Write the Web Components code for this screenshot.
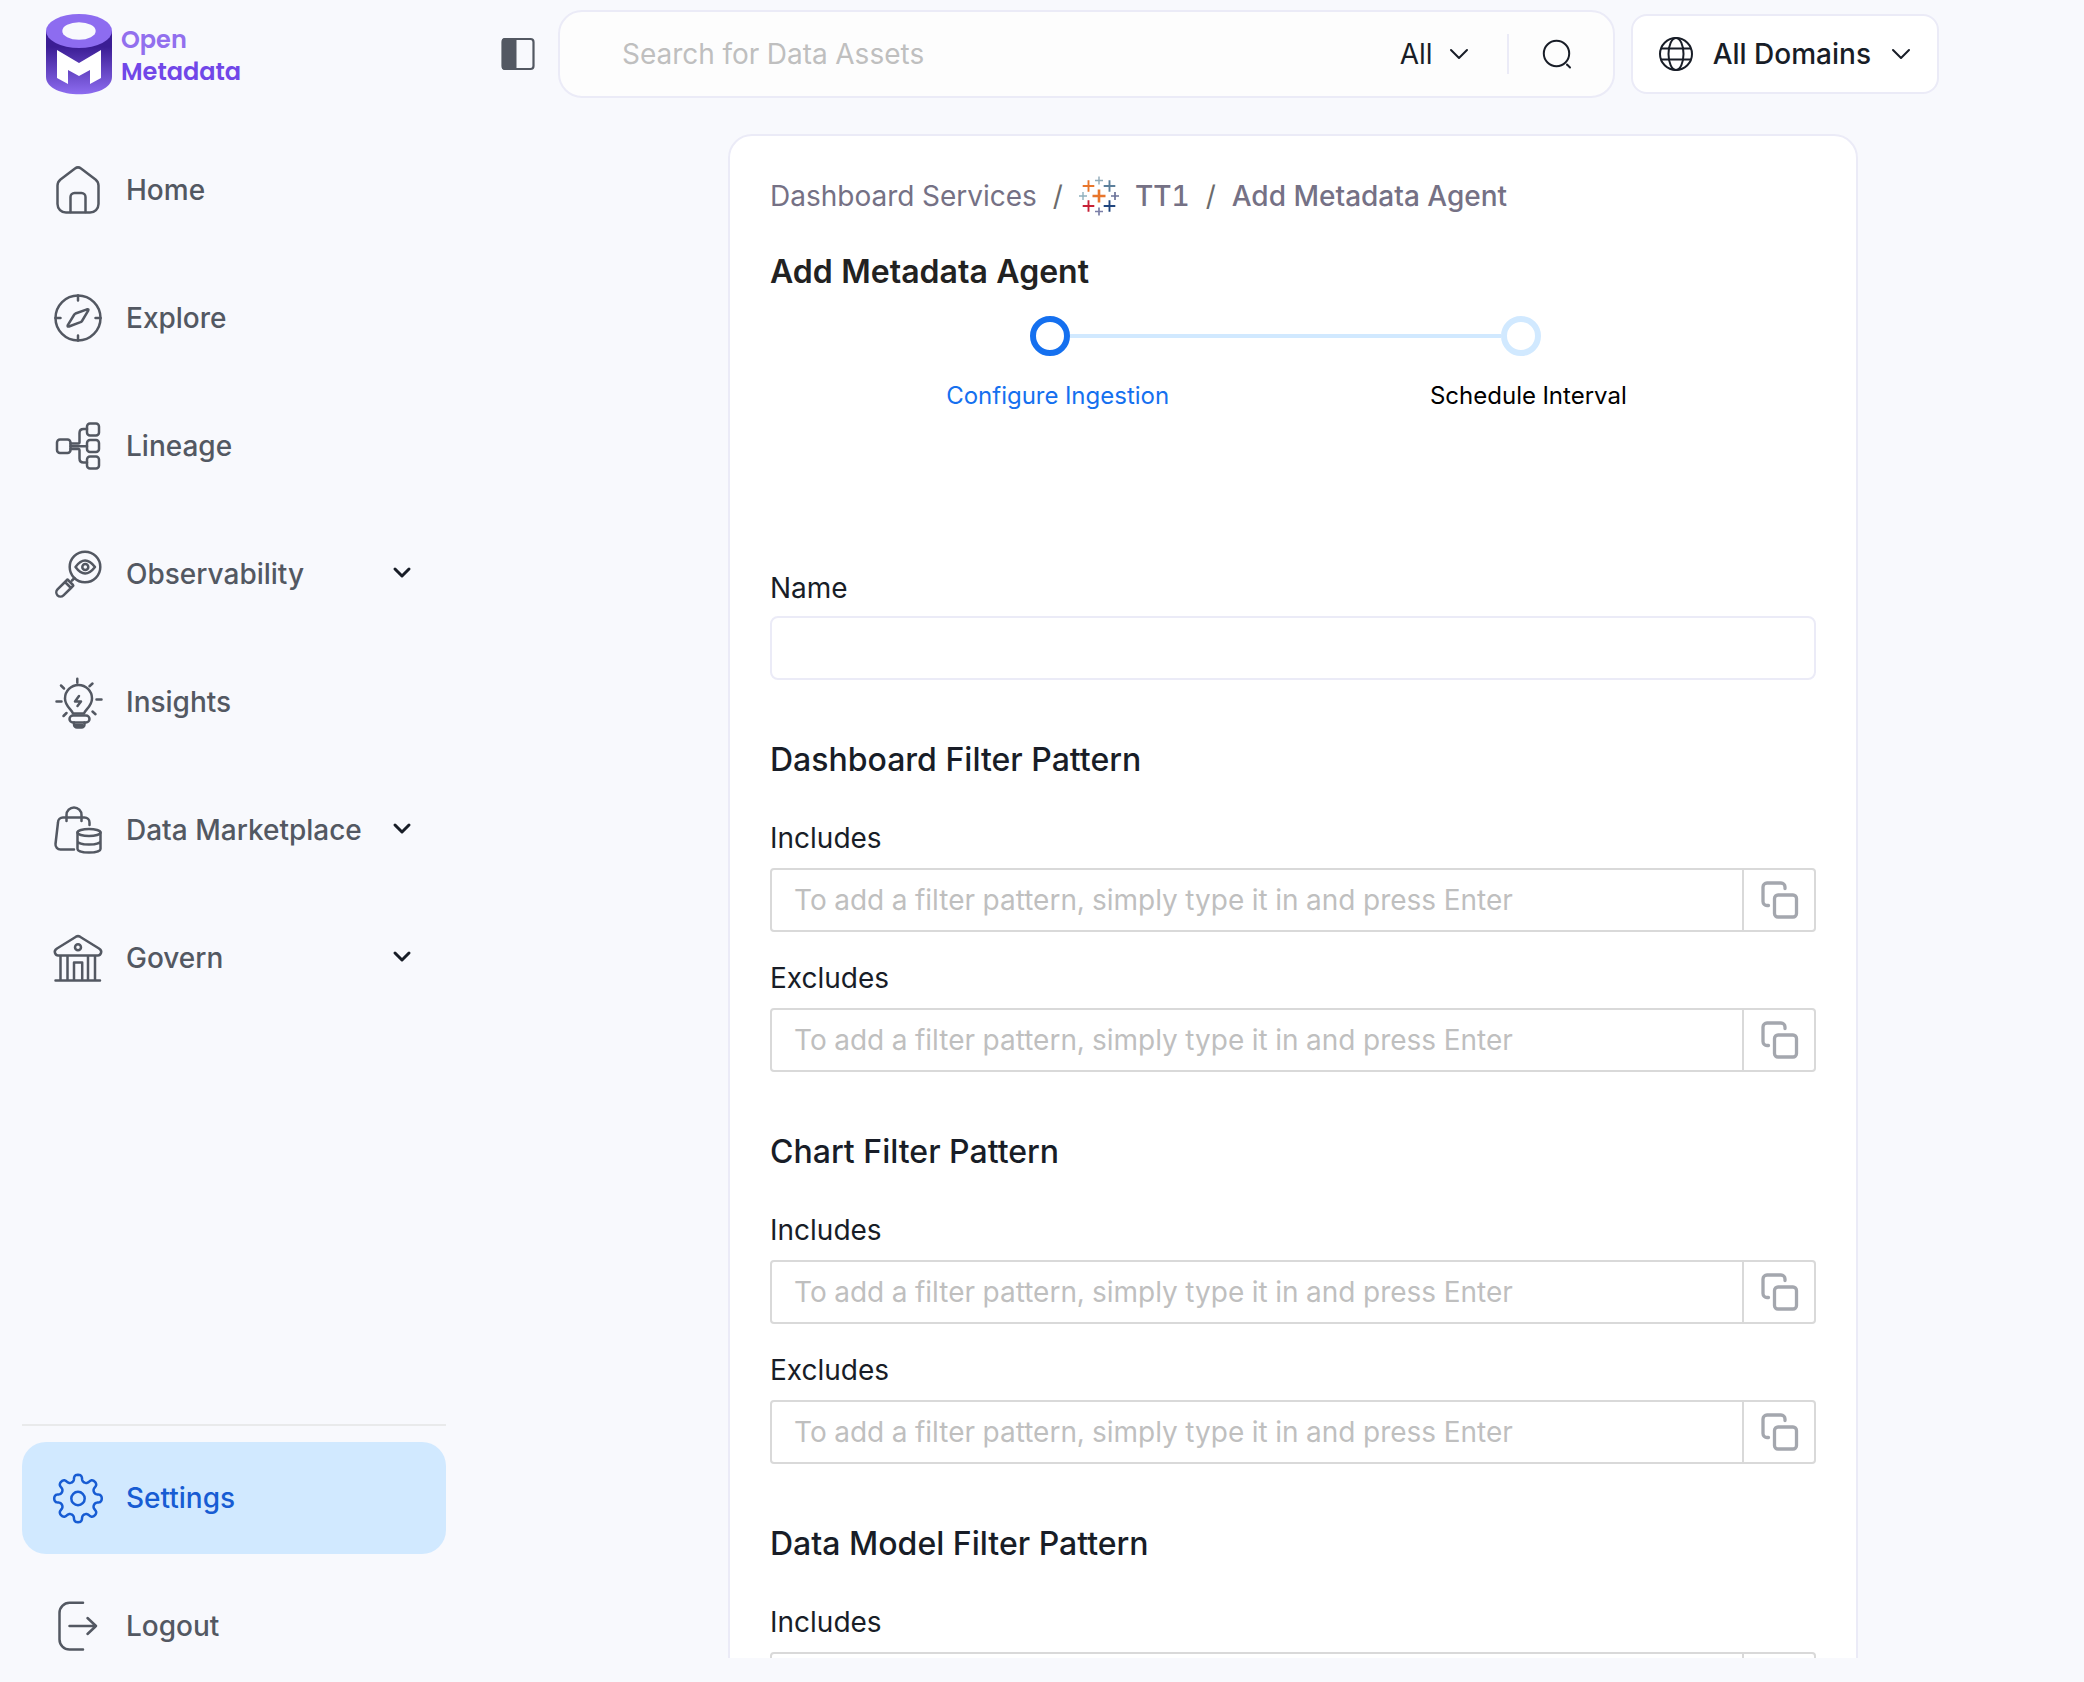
<!DOCTYPE html>
<html lang="en">
<head>
<meta charset="utf-8">
<meta name="viewport" content="width=device-width, initial-scale=1">
<title>Add Metadata Agent</title>
<style>
    :root {
        --bg: #f8f9fd;
        --ink: #181d27;
        --nav: #535862;
        --muted: #757185;
        --line: #ebebf7;
        --line-dark: #d9d9d9;
        --primary: #1570ef;
        --primary-soft: #d1e9ff;
    }
    body {
        margin: 0;
        background: var(--bg);
        color: var(--ink);
        font: 28px/40px Inter, "Liberation Sans", sans-serif;
        font-feature-settings: "tnum";
    }
</style>
</head>
<body>
<om-app>
    <om-sidebar slot="sidebar">
        <om-nav-item icon="home">Home</om-nav-item>
        <om-nav-item icon="explore">Explore</om-nav-item>
        <om-nav-item icon="lineage">Lineage</om-nav-item>
        <om-nav-item icon="observability" expandable>Observability</om-nav-item>
        <om-nav-item icon="insights">Insights</om-nav-item>
        <om-nav-item icon="marketplace" expandable>Data Marketplace</om-nav-item>
        <om-nav-item icon="govern" expandable>Govern</om-nav-item>
        <om-nav-item slot="bottom" icon="settings" active>Settings</om-nav-item>
        <om-nav-item slot="bottom" icon="logout">Logout</om-nav-item>
    </om-sidebar>
    <om-topbar slot="topbar"></om-topbar>
    <om-card>
        <om-breadcrumb></om-breadcrumb>
        <om-title>Add Metadata Agent</om-title>
        <om-stepper></om-stepper>
        <om-text-field label="Name"></om-text-field>
        <om-filter-section heading="Dashboard Filter Pattern">
            <om-pattern-field label="Includes"></om-pattern-field>
            <om-pattern-field label="Excludes"></om-pattern-field>
        </om-filter-section>
        <om-filter-section heading="Chart Filter Pattern">
            <om-pattern-field label="Includes"></om-pattern-field>
            <om-pattern-field label="Excludes"></om-pattern-field>
        </om-filter-section>
        <om-filter-section heading="Data Model Filter Pattern">
            <om-pattern-field label="Includes"></om-pattern-field>
        </om-filter-section>
    </om-card>
</om-app>

<script>
// Eight-lobed outline for the settings icon, in a 48x48 box
function gearPath() {
    const points = [];
    for (let i = 0; i < 160; i++) {
        const t = (i / 160) * Math.PI * 2;
        const r = 20.5 + 3.3 * Math.cos(8 * t);
        const a = t + 0.04 * Math.sin(16 * t);
        points.push(`${(24 + r * Math.sin(a)).toFixed(2)} ${(24.5 - r * Math.cos(a)).toFixed(2)}`);
    }
    return `M${points.join("L")}Z`;
}

const NAV_ICONS = {
    home: `<path d="M21 2.500a5 5 0 0 1 6 0L41.500 13.500a8 8 0 0 1 3 6V38a8.500 8.500 0 0 1-8.500 8.500H12A8.500 8.500 0 0 1 3.500 38V19.500a8 8 0 0 1 3-6Z"/><path d="M16.500 46V31a4 4 0 0 1 4-4h7a4 4 0 0 1 4 4v15"/>`,
    explore: `<circle cx="24" cy="24" r="22.500"/><path d="M24 1.500v5M24 41.500v5M1.500 24h5M41.500 24h5"/><path d="M21.500 19.500 33 15.300q2-.5 1.200 1.400L28 27q-.5.700-1.500 1.200L15 32.500q-2 .5-1.200-1.400L20 21q.6-1 1.500-1.500Z"/>`,
    lineage: `<rect x="3" y="17.500" width="13.500" height="13.500" rx="3"/><rect x="33" y="1.500" width="12" height="12" rx="3"/><rect x="33" y="18" width="12" height="12" rx="3"/><rect x="33" y="34.500" width="12" height="12" rx="3"/><path d="M16.500 21.500h8q1 0 1-1V11q0-4 4-4H33M16.500 24.200H33M16.500 27h8q1 0 1 1v8.500q0 4 4 4H33"/>`,
    observability: `<circle cx="31" cy="17" r="15.300"/><path d="M21.500 17q9.500-13 19.500 0-10 13-19.500 0Z"/><circle cx="31.300" cy="17" r="3"/><path d="M20.500 28 18 30.500M13.500 29.500l5.500 5.500M11 32 3.500 39.300a4.400 4.400 0 0 0 0 6 4.400 4.400 0 0 0 6 0L17 38ZM11 32l2.500-2.500M17 38l2.300-2.300"/>`,
    insights: `<path d="M19 35.500c-1-4-8-7-8-15a13.300 13.300 0 0 1 27 0c0 8-7 11-8 15Z"/><rect x="15.500" y="37.500" width="20" height="7" rx="3.500"/><path d="M20 44.500v2a3 3 0 0 0 3 3h4.500a3 3 0 0 0 3-3v-2M22 47h6M25 18l-4 5.500h6L23.500 28M23.300.8v4M7 7.500l3 3M38.500 5.500l-3 2.700M2.500 23.500h5M42.500 21.500h5M9.500 38l3-3M38.500 33.500l3 2.700"/>`,
    marketplace: `<path d="M20 43.500H6.500a5 5 0 0 1-5-5.500L4 16.500a5 5 0 0 1 5-5h21.500a5 5 0 0 1 5 5V19M12.500 15V9a7.500 7.500 0 0 1 15 0v6"/><ellipse cx="35" cy="26.500" rx="11.500" ry="3.500"/><path d="M23.500 26.500v16.500c0 4.700 23 4.700 23 0V26.500M23.500 35c0 4.700 23 4.700 23 0"/>`,
    govern: `<path d="M22 2.700a4 4 0 0 1 4 0L45 14.500q3 2 2 4.500-1 2.500-3 2.500H4q-2 0-3-2.500-1-2.500 2-4.500ZM1.500 46.500h44.500M6.500 21.500v25M13.500 21.500v25M34 21.500v25M41 21.500v25M20 46V28.500h8.200V46"/><circle cx="24" cy="13.200" r="3"/>`,
    settings: `<path d="${gearPath()}"/><circle cx="24" cy="24.500" r="6.700"/>`,
    logout: `<path d="M29 .8H15.500A10 10 0 0 0 5.500 11v26.500a10 10 0 0 0 10 10H29M15.500 24H42M33.500 16l8.500 8-8.500 8"/>`,
};

const chevron = (width, path = "m2 6 8 8 8-8") => `<svg class="chevron" width="20" height="20" viewBox="0 0 20 20" fill="none" stroke="currentColor" stroke-width="${width}" stroke-linecap="round" stroke-linejoin="round" aria-hidden="true"><path d="${path}"/></svg>`;

class OMElement extends HTMLElement {
    constructor() {
        super();
        this.attachShadow({ mode: "open" });
    }

    connectedCallback() {
        this.shadowRoot.innerHTML = `
            <style>
                * { box-sizing: border-box; }
                button, input, select { font: inherit; color: inherit; }
                button { background: none; border: 0; padding: 0; cursor: pointer; }
                a { color: inherit; text-decoration: none; }
                svg { display: block; flex: none; overflow: visible; }
                ${this.styles()}
            </style>
            ${this.render()}
        `;
    }
}

class OMApp extends OMElement {
    styles() {
        return `
            :host { display: flex; height: 100vh; }
            main {
                flex: 1;
                min-width: 0;
                display: flex;
                flex-direction: column;
                gap: 36px;
                padding: 10px 0 24px 56px;
            }
            .scroll {
                flex: 1;
                min-height: 0;
                overflow-y: auto;
                scrollbar-width: none;
                display: grid;
                grid-template-columns: 1fr 5fr 1fr;
            }
            .page { grid-column: 2; }
        `;
    }

    render() {
        return `
            <slot name="sidebar"></slot>
            <main>
                <slot name="topbar"></slot>
                <div class="scroll"><div class="page"><slot></slot></div></div>
            </main>
        `;
    }
}

class OMSidebar extends OMElement {
    styles() {
        return `
            :host {
                display: flex;
                flex-direction: column;
                justify-content: space-between;
                flex: none;
                width: 446px;
            }
            .logo {
                display: flex;
                align-items: center;
                gap: 9px;
                padding: 14px 46px 40px;
                color: #7147e8;
                font: 600 24px/32px Poppins, Inter, sans-serif;
            }
            .logo div { padding-top: 4px; }
            .logo span { display: block; }
            .open { color: #9270ee; }
            nav { display: flex; flex-direction: column; gap: 16px; padding-left: 22px; }
            .bottom { border-top: 2px solid #e9eaeb; margin-left: 22px; padding: 16px 0 0; }
        `;
    }

    render() {
        return `
            <div>
                <a class="logo" href="#home">
                    <svg width="66" height="80" viewBox="0 0 66 80" aria-hidden="true">
                        <defs><linearGradient id="side" x1="0" y1="0" x2="0" y2="1"><stop offset="0.25" stop-color="#3b1d94"/><stop offset="1" stop-color="#8d6cf0"/></linearGradient></defs>
                        <path fill="url(#side)" d="M0 17h66v46C66 86 0 86 0 63Z"/>
                        <ellipse cx="33" cy="17" rx="33" ry="17" fill="#8d6cf0"/>
                        <ellipse cx="33" cy="17" rx="16.700" ry="8.800" fill="#f8f9fd"/>
                        <path fill="#fff" d="M11 36 33 49 55 36V64L44 70V56L33 62 22 56V70L11 64Z"/>
                    </svg>
                    <div><span class="open">Open</span><span>Metadata</span></div>
                </a>
                <nav aria-label="Main"><slot></slot></nav>
            </div>
            <nav class="bottom" aria-label="Account"><slot name="bottom"></slot></nav>
        `;
    }
}

class OMNavItem extends OMElement {
    styles() {
        return `
            :host { display: block; color: var(--nav); font-weight: 500; }
            :host([active]) { color: #175cd3; }
            .item {
                display: flex;
                align-items: center;
                gap: 24px;
                width: 100%;
                height: 112px;
                padding: 0 34px 0 32px;
                border-radius: 24px;
                text-align: left;
            }
            :host([active]) .item { background: var(--primary-soft); }
            .label { flex: 1; white-space: nowrap; }
            .chevron { color: var(--ink); }
        `;
    }

    render() {
        const icon = `<svg width="48" height="48" viewBox="0 0 48 48" fill="none" stroke="currentColor" stroke-width="2.500" stroke-linecap="round" stroke-linejoin="round" aria-hidden="true">${NAV_ICONS[this.getAttribute("icon")]}</svg>`;
        const label = `<span class="label"><slot></slot></span>`;
        if (this.hasAttribute("expandable")) {
            return `<button class="item" type="button" aria-expanded="false">${icon}${label}${chevron(3, "m3 5 7 7 7-7")}</button>`;
        }
        return `<a class="item" href="#${this.getAttribute("icon")}">${icon}${label}</a>`;
    }
}

class OMTopbar extends OMElement {
    styles() {
        return `
            :host { display: flex; align-items: center; padding-right: 145px; }
            .search {
                flex: 1;
                display: flex;
                align-items: center;
                height: 88px;
                margin: 0 16px 0 22px;
                padding: 0 42px 0 62px;
                border: 2px solid var(--line);
                border-radius: 24px;
                background: #fdfdfd;
            }
            input { flex: 1; min-width: 0; border: 0; padding: 0; outline: 0; background: none; }
            input::placeholder { color: #bfbfbf; opacity: 1; }
            .scope { position: relative; display: flex; align-items: center; }
            select { appearance: none; border: 0; background: none; padding: 0 36px 0 0; }
            .scope svg { position: absolute; right: 0; pointer-events: none; }
            .go { border-left: 2px solid var(--line); margin-left: 38px; padding: 6px 0 6px 34px; }
            .domains {
                display: flex;
                align-items: center;
                gap: 20px;
                height: 80px;
                padding: 0 26px;
                border: 2px solid var(--line);
                border-radius: 16px;
                background: #fff;
                font-weight: 500;
                white-space: nowrap;
            }
        `;
    }

    render() {
        return `
            <button type="button" aria-label="Toggle sidebar">
                <svg width="34" height="34" viewBox="1 0 34 34" aria-hidden="true">
                    <rect x="1.500" y="2" width="31" height="30" rx="3" fill="none" stroke="#535862" stroke-width="2.200"/>
                    <path d="M4 1h11.500v32H4a3 3 0 0 1-3-3V4a3 3 0 0 1 3-3Z" fill="#535862"/>
                </svg>
            </button>
            <div class="search">
                <input type="search" aria-label="Search" placeholder="Search for Data Assets">
                <div class="scope">
                    <select aria-label="Search scope"><option>All</option></select>
                    ${chevron(2)}
                </div>
                <button class="go" type="button" aria-label="Run search">
                    <svg width="28" height="28" viewBox="0 0 28 28" fill="none" stroke="currentColor" stroke-width="2" stroke-linecap="round" aria-hidden="true"><circle cx="13.500" cy="13.500" r="12.700"/><path d="m24 24.500 3 3"/></svg>
                </button>
            </div>
            <button class="domains" type="button" aria-haspopup="listbox">
                <svg width="34" height="34" viewBox="0 0 34 34" fill="none" stroke="currentColor" stroke-width="2" aria-hidden="true">
                    <circle cx="17" cy="17" r="16"/><ellipse cx="17" cy="17" rx="7.500" ry="16"/><path d="M2 11.500h30M2 22.500h30"/>
                </svg>
                <span>All Domains</span>
                ${chevron(2)}
            </button>
        `;
    }
}

class OMCard extends OMElement {
    styles() {
        return `
            :host {
                display: flex;
                flex-direction: column;
                gap: 56px;
                padding: 40px 40px 56px;
                border: 2px solid var(--line);
                border-radius: 24px;
                background: #fff;
            }
            ::slotted(om-title) { margin-top: -24px; }
            ::slotted(om-stepper) { margin-top: -36px; }
        `;
    }

    render() {
        return `<slot></slot>`;
    }
}

class OMTitle extends OMElement {
    styles() {
        return `
            :host { display: block; color: #222; }
            h1 { margin: 0; font: inherit; font-weight: 600; font-size: 32px; line-height: 48px; }
        `;
    }

    render() {
        return `<h1><slot></slot></h1>`;
    }
}

class OMBreadcrumb extends OMElement {
    styles() {
        return `
            :host { display: block; color: var(--muted); }
            ol { display: flex; align-items: center; margin: 0; padding: 0; list-style: none; white-space: nowrap; }
            li, a { display: flex; align-items: center; }
            li + li::before { content: "/"; margin: 0 16px; color: #6b6b6b; }
            .strong { gap: 16px; font-weight: 500; }
        `;
    }

    render() {
        // [x, y, arm length, stroke width, colour]
        const marks = [
            [20, 20, 6.5, 2.6, "#e8762c"], [9.5, 10, 5.8, 1.9, "#e8762c"], [30.5, 10, 5.8, 1.9, "#5b7f9b"],
            [9.5, 30, 5.8, 1.9, "#c72035"], [30.5, 30, 5.8, 1.9, "#1f457e"], [20, 4.5, 4, 1.4, "#8fa9b8"],
            [4, 20, 4, 1.4, "#8fb0bd"], [36, 20, 4, 1.7, "#6b7399"], [20, 35.5, 4, 1.7, "#7b7fa8"],
        ];
        const crosses = marks.map(([x, y, r, w, c]) =>
            `<path d="M${x - r} ${y}h${2 * r}M${x} ${y - r}v${2 * r}" stroke="${c}" stroke-width="${w}"/>`).join("");
        return `
            <nav aria-label="Breadcrumb">
                <ol>
                    <li><a href="#dashboard-services">Dashboard Services</a></li>
                    <li><a class="strong" href="#tt1"><svg width="40" height="40" viewBox="0 0 40 40" aria-hidden="true">${crosses}</svg>TT1</a></li>
                    <li><span class="strong" aria-current="page">Add Metadata Agent</span></li>
                </ol>
            </nav>
        `;
    }
}

class OMStepper extends OMElement {
    styles() {
        return `
            :host { display: block; margin-bottom: 98px; }
            ol {
                display: grid;
                grid-template-columns: 45% 45%;
                justify-content: center;
                margin: 0;
                padding: 0;
                list-style: none;
                color: #000;
                font-size: 24px;
                line-height: 32px;
                text-align: center;
            }
            .track { display: grid; grid-template-columns: 14fr 40px 15fr; align-items: center; margin-bottom: 24px; }
            .dot { height: 40px; border: 6px solid var(--primary-soft); border-radius: 50%; }
            .tail { height: 4px; }
            .active { color: var(--primary); }
            .active .dot { border-color: var(--primary); }
            li:not(:first-child) .before, li:not(:last-child) .after { background: var(--primary-soft); }
        `;
    }

    render() {
        const track = `<div class="track"><i class="tail before"></i><i class="dot"></i><i class="tail after"></i></div>`;
        return `
            <ol>
                <li class="active" aria-current="step">${track}Configure Ingestion</li>
                <li>${track}Schedule Interval</li>
            </ol>
        `;
    }
}

class OMTextField extends OMElement {
    styles() {
        return `
            :host { display: block; }
            label { display: block; margin-bottom: 6px; line-height: 44px; }
            input {
                display: block;
                width: 100%;
                height: 64px;
                padding: 0 22px;
                border: 2px solid var(--line);
                border-radius: 8px;
                background: #fff;
            }
        `;
    }

    render() {
        return `
            <label for="field">${this.getAttribute("label")}</label>
            <input id="field" type="text">
        `;
    }
}

class OMFilterSection extends OMElement {
    styles() {
        return `
            :host { display: flex; flex-direction: column; gap: 24px; }
            h2 { margin: 0 0 8px; font: inherit; font-weight: 500; font-size: 32px; line-height: 48px; }
        `;
    }

    render() {
        return `<h2>${this.getAttribute("heading")}</h2><slot></slot>`;
    }
}

class OMPatternField extends OMElement {
    styles() {
        return `
            :host { display: block; }
            label { display: block; margin-bottom: 8px; line-height: 44px; }
            .box {
                display: flex;
                height: 64px;
                border: 2px solid var(--line-dark);
                border-radius: 4px;
                background: #fff;
            }
            input { flex: 1; min-width: 0; border: 0; padding: 0 22px; background: none; }
            input::placeholder { color: #bfbfbf; opacity: 1; }
            button { display: grid; place-items: center; width: 72px; border-left: 2px solid var(--line-dark); }
        `;
    }

    render() {
        return `
            <label for="pattern">${this.getAttribute("label")}</label>
            <div class="box">
                <input id="pattern" type="text" placeholder="To add a filter pattern, simply type it in and press Enter">
                <button type="button" aria-label="Copy">
                    <svg width="38" height="38" viewBox="-1 0 38 38" fill="none" stroke="#a4a7ae" stroke-width="3.300" stroke-linecap="round" stroke-linejoin="round" aria-hidden="true">
                        <rect x="13.500" y="14" width="22" height="22" rx="3.500"/>
                        <path d="M7.500 24.500H6A4 4 0 0 1 2 20.500V6a4 4 0 0 1 4-4h14a4 4 0 0 1 4 4v1.500"/>
                    </svg>
                </button>
            </div>
        `;
    }
}

customElements.define("om-app", OMApp);
customElements.define("om-sidebar", OMSidebar);
customElements.define("om-nav-item", OMNavItem);
customElements.define("om-topbar", OMTopbar);
customElements.define("om-card", OMCard);
customElements.define("om-title", OMTitle);
customElements.define("om-breadcrumb", OMBreadcrumb);
customElements.define("om-stepper", OMStepper);
customElements.define("om-text-field", OMTextField);
customElements.define("om-filter-section", OMFilterSection);
customElements.define("om-pattern-field", OMPatternField);
</script>
</body>
</html>
